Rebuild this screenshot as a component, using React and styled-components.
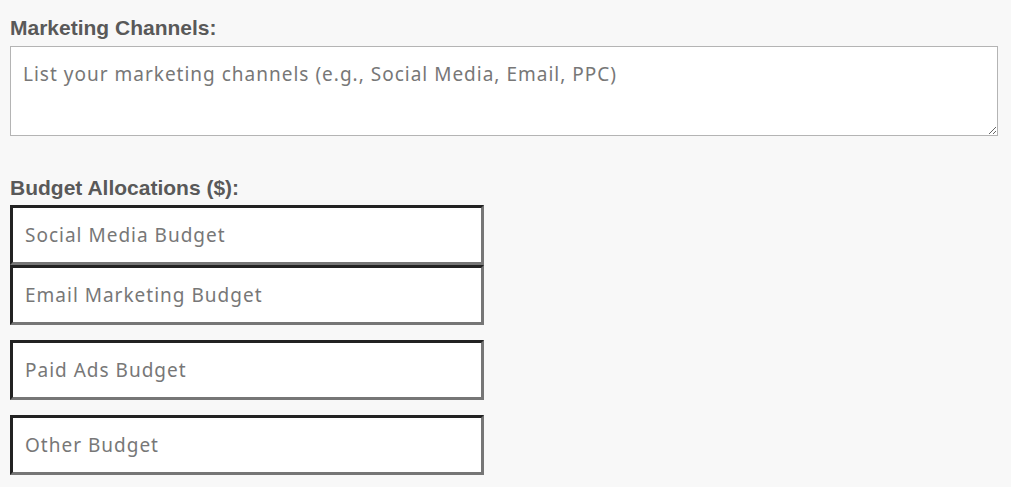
import React from 'react';
import styled, { createGlobalStyle } from 'styled-components';

const GlobalStyle = createGlobalStyle`
    body {
        margin: 0;
        background: #f8f8f8;
        font-family: "Liberation Sans", Arial, sans-serif;
    }
`;

const Page = styled.div`
    padding: 17px 10px 0 10px;
    display: flex;
    flex-direction: column;
`;

const Label = styled.label`
    display: block;
    font-size: 21px;
    font-weight: bold;
    color: #595959;
    line-height: 22px;
    margin-bottom: 7px;
`;

const TextArea = styled.textarea`
    box-sizing: border-box;
    width: 988px;
    height: 90px;
    border: 1px solid #b4b4b4;
    background: #fff;
    padding: 14px 12px 12px;
    font-family: "Noto Sans", sans-serif;
    font-size: 19px;
    letter-spacing: 1px;
    color: #333;
    margin: 0 0 41px 0;
    display: block;

    &::placeholder {
        color: #777;
    }
`;

const BudgetList = styled.div`
    display: flex;
    flex-direction: column;
    margin-top: -1px;
`;

const BudgetInput = styled.input`
    box-sizing: border-box;
    width: 474px;
    height: 60px;
    margin: 0 0 ${(props) => props.gap}px 0;
    padding: 0 12px;
    background: #fff;
    border-style: solid;
    border-width: 3px;
    border-color: #222 #767676 #767676 #222;
    font-family: "Noto Sans", sans-serif;
    font-size: 19px;
    letter-spacing: 1px;
    color: #333;

    &::placeholder {
        color: #777;
    }
`;

const budgets = [
    { text: 'Social Media Budget', gap: 0 },
    { text: 'Email Marketing Budget', gap: 15 },
    { text: 'Paid Ads Budget', gap: 15 },
    { text: 'Other Budget', gap: 0 },
];

export default function App() {
    return (
        <>
            <GlobalStyle />
            <Page>
                <Label>Marketing Channels:</Label>
                <TextArea placeholder="List your marketing channels (e.g., Social Media, Email, PPC)" />

                <Label>Budget Allocations ($):</Label>
                <BudgetList>
                    {budgets.map((b) => (
                        <BudgetInput key={b.text} type="number" placeholder={b.text} gap={b.gap} />
                    ))}
                </BudgetList>
            </Page>
        </>
    );
}
